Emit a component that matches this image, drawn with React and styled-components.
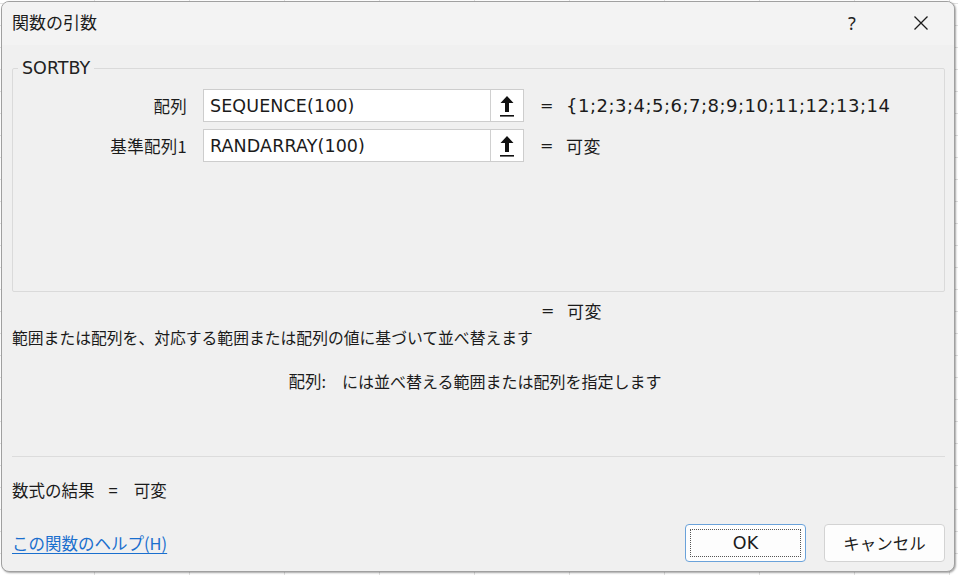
import React from 'react'
import styled, { createGlobalStyle } from 'styled-components'

const GlobalStyle = createGlobalStyle`
  html, body {
    margin: 0;
    padding: 0;
  }
  body {
    width: 958px;
    height: 575px;
    overflow: hidden;
    background-color: #ffffff;
    background-image:
      repeating-linear-gradient(90deg, transparent 0 94px, #e1e1e1 94px 95px),
      repeating-linear-gradient(0deg, transparent 0 21px, #e1e1e1 21px 22px);
    font-family: "DejaVu Sans", "Noto Sans CJK JP", sans-serif;
    color: #1b1b1b;
  }
`

const Dialog = styled.div`
  margin: 1px 0 0 1px;
  width: 952px;
  height: 569px;
  border: 1px solid #a0a0a0;
  border-radius: 8px;
  background: #f0f0f0;
  box-shadow: 1px 1px 2px rgba(0, 0, 0, 0.35);
  display: flex;
  flex-direction: column;
  overflow: hidden;
`

const TitleBar = styled.div`
  height: 43px;
  background: #f3f3f3;
  display: flex;
  align-items: center;
  padding-left: 10px;
  padding-right: 10px;
`

const Title = styled.div`
  flex: 1;
  font-family: "Noto Sans CJK JP", sans-serif;
  font-size: 17px;
  padding-bottom: 5px;
`

const TitleButton = styled.div`
  width: 46px;
  height: 43px;
  display: flex;
  align-items: center;
  justify-content: center;
  padding-bottom: 2px;
  box-sizing: border-box;
  margin-left: ${p => p.$gap || 0}px;
  font-family: "Noto Sans", sans-serif;
  font-size: 18px;
  color: #222;
`

const Body = styled.div`
  flex: 1;
  display: flex;
  flex-direction: column;
  padding: 0 9px 0 10px;
`

const Group = styled.fieldset`
  margin: 12px 0 0 0;
  padding: 10px 0 0 0;
  border: 1px solid #dadada;
  border-radius: 2px;
  box-sizing: border-box;
  height: 235px;
`

const Legend = styled.legend`
  margin-left: 5px;
  padding: 0 4px;
  font-size: 17.5px;
  line-height: 22px;
  color: #222;
`

const ArgGrid = styled.div`
  display: grid;
  grid-template-columns: 174px 321px auto;
  grid-auto-rows: 33px;
  row-gap: 7px;
  column-gap: 16px;
  align-items: center;
`

const ArgLabel = styled.div`
  text-align: right;
  font-size: 16.5px;
  font-family: "Noto Sans CJK JP", sans-serif;
  letter-spacing: 0.3px;
`

const InputBox = styled.div`
  display: flex;
  height: 33px;
  box-sizing: border-box;
  border: 1px solid #cdcdcd;
  background: #ffffff;
`

const InputText = styled.div`
  flex: 1;
  display: flex;
  align-items: center;
  padding-left: 6px;
  font-size: 17.5px;
  letter-spacing: 0.1px;
`

const RefButton = styled.div`
  width: 32px;
  border-left: 1px solid #d0d0d0;
  display: flex;
  align-items: center;
  justify-content: center;
  background: #ffffff;
`

const Value = styled.div`
  display: flex;
  align-items: center;
  gap: 20px;
  font-size: 18px;
  letter-spacing: 0.5px;
  white-space: nowrap;
`

const Eq = styled.span`
  font-size: 16px;
  width: 6px;
  letter-spacing: 0;
`

const JpValue = styled.span`
  font-family: "Noto Sans CJK JP", sans-serif;
  font-size: 17px;
  letter-spacing: 0.5px;
`

const ResultRow = styled.div`
  margin-top: 7px;
  padding-left: 529px;
  height: 22px;
  display: flex;
  align-items: center;
  gap: 20px;
`

const Description = styled.div`
  margin-top: 6px;
  font-family: "Noto Sans CJK JP", sans-serif;
  font-size: 15.8px;
  line-height: 22px;
`

const HelpRow = styled.div`
  margin-top: 21px;
  display: flex;
  align-items: center;
  height: 22px;
  font-family: "Noto Sans CJK JP", sans-serif;
  font-size: 16px;
`

const HelpLabel = styled.div`
  width: 314px;
  text-align: right;
  font-size: 16.5px;
`

const HelpText = styled.div`
  margin-left: 16px;
`

const Separator = styled.div`
  margin-top: 64px;
  height: 1px;
  background: #dcdcdc;
`

const FormulaRow = styled.div`
  margin-top: 22px;
  height: 22px;
  display: flex;
  align-items: center;
  font-family: "Noto Sans CJK JP", sans-serif;
  font-size: 16.5px;
`

const FormulaEq = styled.span`
  margin: 0 16px 0 14px;
`

const Footer = styled.div`
  margin-top: 16px;
  display: flex;
  align-items: flex-start;
  justify-content: space-between;
`

const HelpLink = styled.a`
  margin-top: 14px;
  font-family: "Noto Sans CJK JP", sans-serif;
  font-size: 16.5px;
  line-height: 24px;
  color: #1a6fce;
  text-decoration: underline;
  text-underline-offset: 3px;
  cursor: pointer;
`

const Buttons = styled.div`
  display: flex;
  gap: 18px;
  padding-top: 7px;
`

const Button = styled.button`
  width: 121px;
  height: 38px;
  box-sizing: border-box;
  border: 1px solid ${p => (p.$primary ? '#6aa2da' : '#d3d3d3')};
  border-radius: 4px;
  background: #fdfdfd;
  padding: 4px;
  color: #1b1b1b;
  display: flex;
`

const FocusRing = styled.span`
  flex: 1;
  display: flex;
  align-items: center;
  justify-content: center;
  border: 1px dotted ${p => (p.$show ? '#555' : 'transparent')};
  font-family: ${p => (p.$jp ? '"Noto Sans CJK JP", sans-serif' : '"DejaVu Sans", sans-serif')};
  font-size: ${p => (p.$jp ? '16.5px' : '17.5px')};
`

const RefIcon = () => (
  <svg width="16" height="24" viewBox="0 0 16 24">
    <path d="M8 2 L14.5 9 L10 9 L10 18 L6 18 L6 9 L1.5 9 Z" fill="#111" />
    <rect x="1" y="21" width="14" height="1.6" fill="#111" />
  </svg>
)

const CloseIcon = () => (
  <svg width="16" height="16" viewBox="0 0 16 16">
    <path d="M1.5 1.5 L14.5 14.5 M14.5 1.5 L1.5 14.5" stroke="#1b1b1b" strokeWidth="1.3" />
  </svg>
)

const args = [
  { label: '配列', text: 'SEQUENCE(100)', value: '{1;2;3;4;5;6;7;8;9;10;11;12;13;14', jp: false },
  { label: '基準配列1', text: 'RANDARRAY(100)', value: '可変', jp: true },
]

export default function App() {
  return (
    <>
      <GlobalStyle />
      <Dialog>
        <TitleBar>
          <Title>関数の引数</Title>
          <TitleButton>?</TitleButton>
          <TitleButton $gap={23}>
            <CloseIcon />
          </TitleButton>
        </TitleBar>
        <Body>
          <Group>
            <Legend>SORTBY</Legend>
            <ArgGrid>
              {args.map(a => (
                <React.Fragment key={a.label}>
                  <ArgLabel>{a.label}</ArgLabel>
                  <InputBox>
                    <InputText>{a.text}</InputText>
                    <RefButton>
                      <RefIcon />
                    </RefButton>
                  </InputBox>
                  <Value>
                    <Eq>=</Eq>
                    {a.jp ? <JpValue>{a.value}</JpValue> : <span>{a.value}</span>}
                  </Value>
                </React.Fragment>
              ))}
            </ArgGrid>
          </Group>
          <ResultRow>
            <Eq>=</Eq>
            <JpValue>可変</JpValue>
          </ResultRow>
          <Description>範囲または配列を、対応する範囲または配列の値に基づいて並べ替えます</Description>
          <HelpRow>
            <HelpLabel>配列:</HelpLabel>
            <HelpText>には並べ替える範囲または配列を指定します</HelpText>
          </HelpRow>
          <Separator />
          <FormulaRow>
            <span>数式の結果</span>
            <FormulaEq>=</FormulaEq>
            <span>可変</span>
          </FormulaRow>
          <Footer>
            <HelpLink>この関数のヘルプ(H)</HelpLink>
            <Buttons>
              <Button $primary>
                <FocusRing $show>OK</FocusRing>
              </Button>
              <Button>
                <FocusRing $jp>キャンセル</FocusRing>
              </Button>
            </Buttons>
          </Footer>
        </Body>
      </Dialog>
    </>
  )
}
